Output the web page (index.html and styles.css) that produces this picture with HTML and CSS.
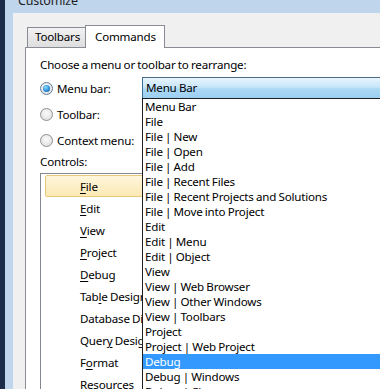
FILE: index.html
```html
<!DOCTYPE html>
<html>
<head>
<meta charset="utf-8">
<link rel="stylesheet" href="styles.css">
</head>
<body>
<div class="screen">
  <div class="window">
    <div class="titlebar"><span class="title">Customize</span></div>
    <div class="client">
      <div class="tabs">
        <div class="tab">Toolbars</div>
        <div class="tab active">Commands</div>
      </div>
      <div class="panel">
        <div class="prompt">Choose a menu or toolbar to rearrange:</div>
        <div class="opt-row">
          <label class="opt"><span class="radio checked"></span>Menu bar:</label>
          <div class="combo-wrap">
            <div class="combo">Menu Bar</div>
            <ul class="dropdown">
              <li>Menu Bar</li>
              <li>File</li>
              <li>File | New</li>
              <li>File | Open</li>
              <li>File | Add</li>
              <li>File | Recent Files</li>
              <li>File | Recent Projects and Solutions</li>
              <li>File | Move into Project</li>
              <li>Edit</li>
              <li>Edit | Menu</li>
              <li>Edit | Object</li>
              <li>View</li>
              <li>View | Web Browser</li>
              <li>View | Other Windows</li>
              <li>View | Toolbars</li>
              <li>Project</li>
              <li>Project | Web Project</li>
              <li class="sel">Debug</li>
              <li>Debug | Windows</li>
              <li>Debug | Clear</li>
            </ul>
          </div>
        </div>
        <div class="opt-row">
          <label class="opt"><span class="radio"></span>Toolbar:</label>
        </div>
        <div class="opt-row">
          <label class="opt"><span class="radio"></span>Context menu:</label>
        </div>
        <div class="controls-label">Controls:</div>
        <div class="listbox">
          <div class="item hot"><u>F</u>ile</div>
          <div class="item"><u>E</u>dit</div>
          <div class="item"><u>V</u>iew</div>
          <div class="item"><u>P</u>roject</div>
          <div class="item"><u>D</u>ebug</div>
          <div class="item">Tab<u>l</u>e Designer</div>
          <div class="item">Database Diagram</div>
          <div class="item">Quer<u>y</u> Designer</div>
          <div class="item">F<u>o</u>rmat</div>
          <div class="item">Resources</div>
        </div>
      </div>
    </div>
  </div>
</div>
</body>
</html>
```

FILE: styles.css
```css
* { box-sizing: border-box; }
html, body { margin: 0; padding: 0; }
body {
  width: 380px;
  height: 389px;
  overflow: hidden;
  font-family: "Noto Sans", "Open Sans", sans-serif;
  font-size: 11.6px;
  letter-spacing: -0.2px;
  word-spacing: -0.5px;
  color: #000;
}
.screen {
  height: 389px;
  background: #1c2b47;
  padding-left: 5px;
}
.window {
  height: 389px;
  width: 420px;
  background: #bfd5ec;
  padding-left: 8px;
}
.titlebar {
  height: 13px;
  overflow: hidden;
}
.title {
  display: block;
  margin-top: -8px;
  margin-left: 5px;
  font-size: 12.5px;
  line-height: 18px;
  color: #1e1e1e;
}
.client {
  background: #f0f0f0;
  height: 376px;
  padding: 12px 0 0 12px;
}
.tabs {
  display: flex;
  align-items: flex-end;
  height: 22px;
  padding-left: 2px;
}
.tab {
  height: 20px;
  width: 59px;
  border: 1px solid #898c95;
  border-bottom: none;
  background: linear-gradient(#f2f2f2, #dedede);
  padding-left: 7px;
  line-height: 18px;
}
.tab.active {
  height: 23px;
  width: 80px;
  margin-left: -1px;
  background: #fff;
  padding-left: 9px;
  line-height: 21px;
  position: relative;
  z-index: 1;
  margin-bottom: -1px;
}
.panel {
  border: 1px solid #898c95;
  background: #fff;
  height: 400px;
  padding: 9px 0 0 14px;
}
.prompt {
  line-height: 16px;
  height: 18px;
}
.opt-row {
  display: flex;
  align-items: center;
  height: 26px;
}
.opt {
  display: flex;
  align-items: center;
  width: 102px;
  flex: none;
}
.radio {
  width: 13px;
  height: 13px;
  border-radius: 50%;
  border: 1px solid #8f8f8f;
  background: radial-gradient(circle at 50% 40%, #fafafa 0, #e4e4e4 70%, #d2d2d2 100%);
  margin-right: 4px;
  position: relative;
  flex: none;
}
.radio.checked {
  border-color: #5f7f9c;
}
.radio.checked::after {
  content: "";
  position: absolute;
  left: 2px;
  top: 2px;
  width: 7px;
  height: 7px;
  border-radius: 50%;
  background: radial-gradient(circle at 40% 35%, #8fe0ff 0, #2a8fd8 55%, #1a4f8f 100%);
}
.combo-wrap {
  position: relative;
  flex: none;
  width: 260px;
}
.combo {
  height: 22px;
  border: 1px solid #3c6f93;
  border-top-color: #4a6c84;
  border-bottom-color: #2f5a78;
  background: linear-gradient(#e9f5fd 0, #c7e6fa 45%, #acd8f5 55%, #9ccff2 100%);
  padding-left: 3px;
  line-height: 20px;
}
.dropdown {
  position: absolute;
  left: 0;
  top: 21px;
  width: 260px;
  margin: 0;
  padding: 0;
  list-style: none;
  background: #fff;
  border: 1px solid #1e1e1e;
  z-index: 5;
}
.dropdown li {
  height: 15px;
  line-height: 15px;
  padding-left: 2px;
  white-space: nowrap;
}
.dropdown li.sel {
  background: #3399ff;
  color: #fff;
}
.controls-label {
  line-height: 16px;
  height: 20px;
  padding-top: 1px;
}
.listbox {
  width: 210px;
  height: 260px;
  border: 1px solid #828790;
  background: #fff;
  padding: 1px 0 0 4px;
}
.item {
  height: 22px;
  line-height: 21px;
  padding-left: 34px;
  white-space: nowrap;
  border: 1px solid transparent;
  border-radius: 2px;
}
.item.hot {
  border-color: #e6c97a;
  background: linear-gradient(#fef6dd, #fce9b3);
}
u { text-decoration-thickness: 1px; text-underline-offset: 2px; }
```
